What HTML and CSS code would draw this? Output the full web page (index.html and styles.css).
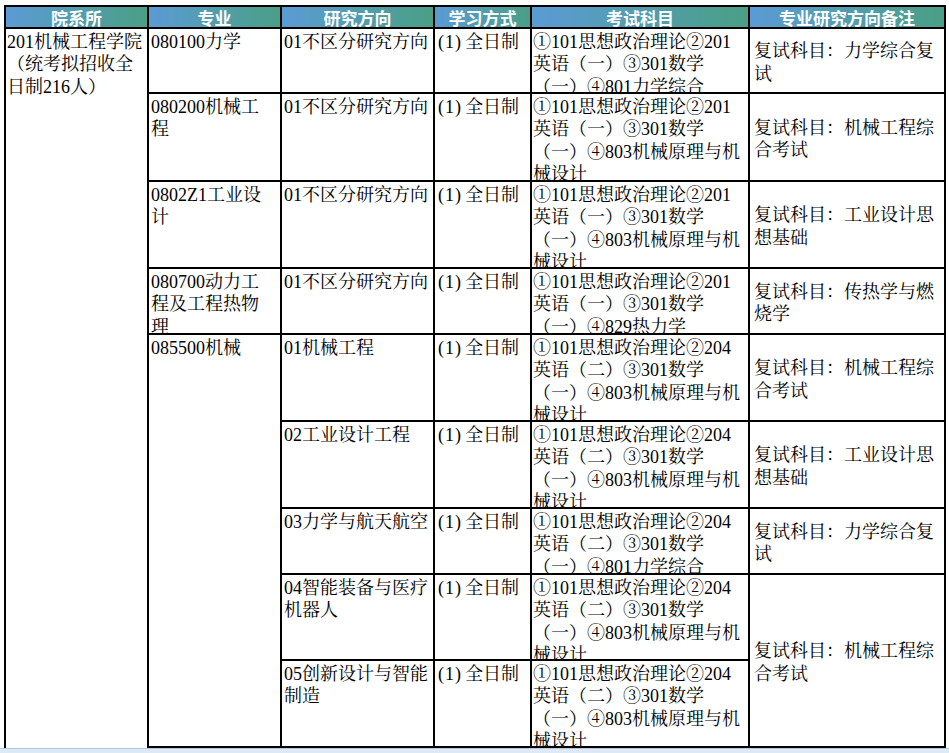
FILE: index.html
```html
<!DOCTYPE html>
<html lang="zh-CN">
<head>
<meta charset="utf-8">
<title>招生专业目录</title>
<link rel="stylesheet" href="styles.css">
</head>
<body>
<div class="sheet">
  <div class="hd">院系所</div>
  <div class="hd">专业</div>
  <div class="hd">研究方向</div>
  <div class="hd">学习方式</div>
  <div class="hd">考试科目</div>
  <div class="hd">专业研究方向备注</div>

  <div class="c dept span-all">201机械工程学院<br>（统考拟招收全<br>日制216人）</div>
  <div class="c major">080100力学</div>
  <div class="c dir">01不区分研究方向</div>
  <div class="c mode"><span class="num">(1)</span>全日制</div>
  <div class="c exam">①101思想政治理论②201<br>英语（一）③301数学<br>（一）④801力学综合</div>
  <div class="c note">复试科目：力学综合复<br>试</div>

  <div class="c major">080200机械工<br>程</div>
  <div class="c dir">01不区分研究方向</div>
  <div class="c mode"><span class="num">(1)</span>全日制</div>
  <div class="c exam">①101思想政治理论②201<br>英语（一）③301数学<br>（一）④803机械原理与机<br>械设计</div>
  <div class="c note">复试科目：机械工程综<br>合考试</div>

  <div class="c major">0802Z1工业设<br>计</div>
  <div class="c dir">01不区分研究方向</div>
  <div class="c mode"><span class="num">(1)</span>全日制</div>
  <div class="c exam">①101思想政治理论②201<br>英语（一）③301数学<br>（一）④803机械原理与机<br>械设计</div>
  <div class="c note">复试科目：工业设计思<br>想基础</div>

  <div class="c major">080700动力工<br>程及工程热物<br>理</div>
  <div class="c dir">01不区分研究方向</div>
  <div class="c mode"><span class="num">(1)</span>全日制</div>
  <div class="c exam">①101思想政治理论②201<br>英语（一）③301数学<br>（一）④829热力学</div>
  <div class="c note">复试科目：传热学与燃<br>烧学</div>

  <div class="c major span5">085500机械</div>
  <div class="c dir">01机械工程</div>
  <div class="c mode"><span class="num">(1)</span>全日制</div>
  <div class="c exam">①101思想政治理论②204<br>英语（二）③301数学<br>（一）④803机械原理与机<br>械设计</div>
  <div class="c note">复试科目：机械工程综<br>合考试</div>

  <div class="c dir">02工业设计工程</div>
  <div class="c mode"><span class="num">(1)</span>全日制</div>
  <div class="c exam">①101思想政治理论②204<br>英语（二）③301数学<br>（一）④803机械原理与机<br>械设计</div>
  <div class="c note">复试科目：工业设计思<br>想基础</div>

  <div class="c dir">03力学与航天航空</div>
  <div class="c mode"><span class="num">(1)</span>全日制</div>
  <div class="c exam">①101思想政治理论②204<br>英语（二）③301数学<br>（一）④801力学综合</div>
  <div class="c note">复试科目：力学综合复<br>试</div>

  <div class="c dir">04智能装备与医疗<br>机器人</div>
  <div class="c mode"><span class="num">(1)</span>全日制</div>
  <div class="c exam">①101思想政治理论②204<br>英语（二）③301数学<br>（一）④803机械原理与机<br>械设计</div>
  <div class="c note span2">复试科目：机械工程综<br>合考试</div>

  <div class="c dir">05创新设计与智能<br>制造</div>
  <div class="c mode"><span class="num">(1)</span>全日制</div>
  <div class="c exam">①101思想政治理论②204<br>英语（二）③301数学<br>（一）④803机械原理与机<br>械设计</div>

  <div class="c filler"></div>
</div>
<div class="frame-edge"></div>
</body>
</html>
```
FILE: styles.css
```css
html, body {
  margin: 0;
  padding: 0;
  background: #ffffff;
}

body {
  overflow: hidden;
  font-family: "Liberation Serif", "Noto Serif CJK SC", "Noto Sans CJK SC", serif;
  color: #000;
}

.sheet {
  display: grid;
  grid-template-columns: 141px 131px 151px 95px 216px 194px;
  grid-template-rows: 20px 63px 86px 85px 64px 85px 85px 64px 84px 85px 14px;
  gap: 2px;
  padding: 2px;
  background: #000;
  width: max-content;
  margin: 5px 0 0 4px;
}

.hd {
  background: linear-gradient(to right, #5b9bd5, #4a9f86);
  color: #fff;
  font-family: "Noto Sans CJK SC", sans-serif;
  font-weight: 700;
  font-size: 17px;
  line-height: 20px;
  text-align: center;
  white-space: nowrap;
  padding-top: 1px;
  box-sizing: border-box;
}

.c {
  background: #fff;
  font-size: 18px;
  line-height: 22.4px;
  white-space: nowrap;
  overflow: hidden;
  padding-top: 2px;
  box-sizing: border-box;
}

.dept { padding-left: 1px; }
.major { padding-left: 2px; }
.dir { padding-left: 2px; }
.mode { padding-left: 3px; }
.exam { padding-left: 1px; }

.num {
  letter-spacing: 1px;
  margin-right: 3px;
}

.note {
  padding-left: 4px;
  padding-top: 4px;
  display: flex;
  align-items: center;
}

.span-all { grid-row: span 10; }
.span5 { grid-row: span 5; }
.span2 { grid-row: span 2; }

.filler {
  grid-column: 2 / -1;
}

.frame-edge {
  position: fixed;
  left: 0;
  right: 0;
  bottom: 0;
  height: 4px;
  background: #dce9f6;
  border-top: 1px solid #b9c7d6;
}
```
